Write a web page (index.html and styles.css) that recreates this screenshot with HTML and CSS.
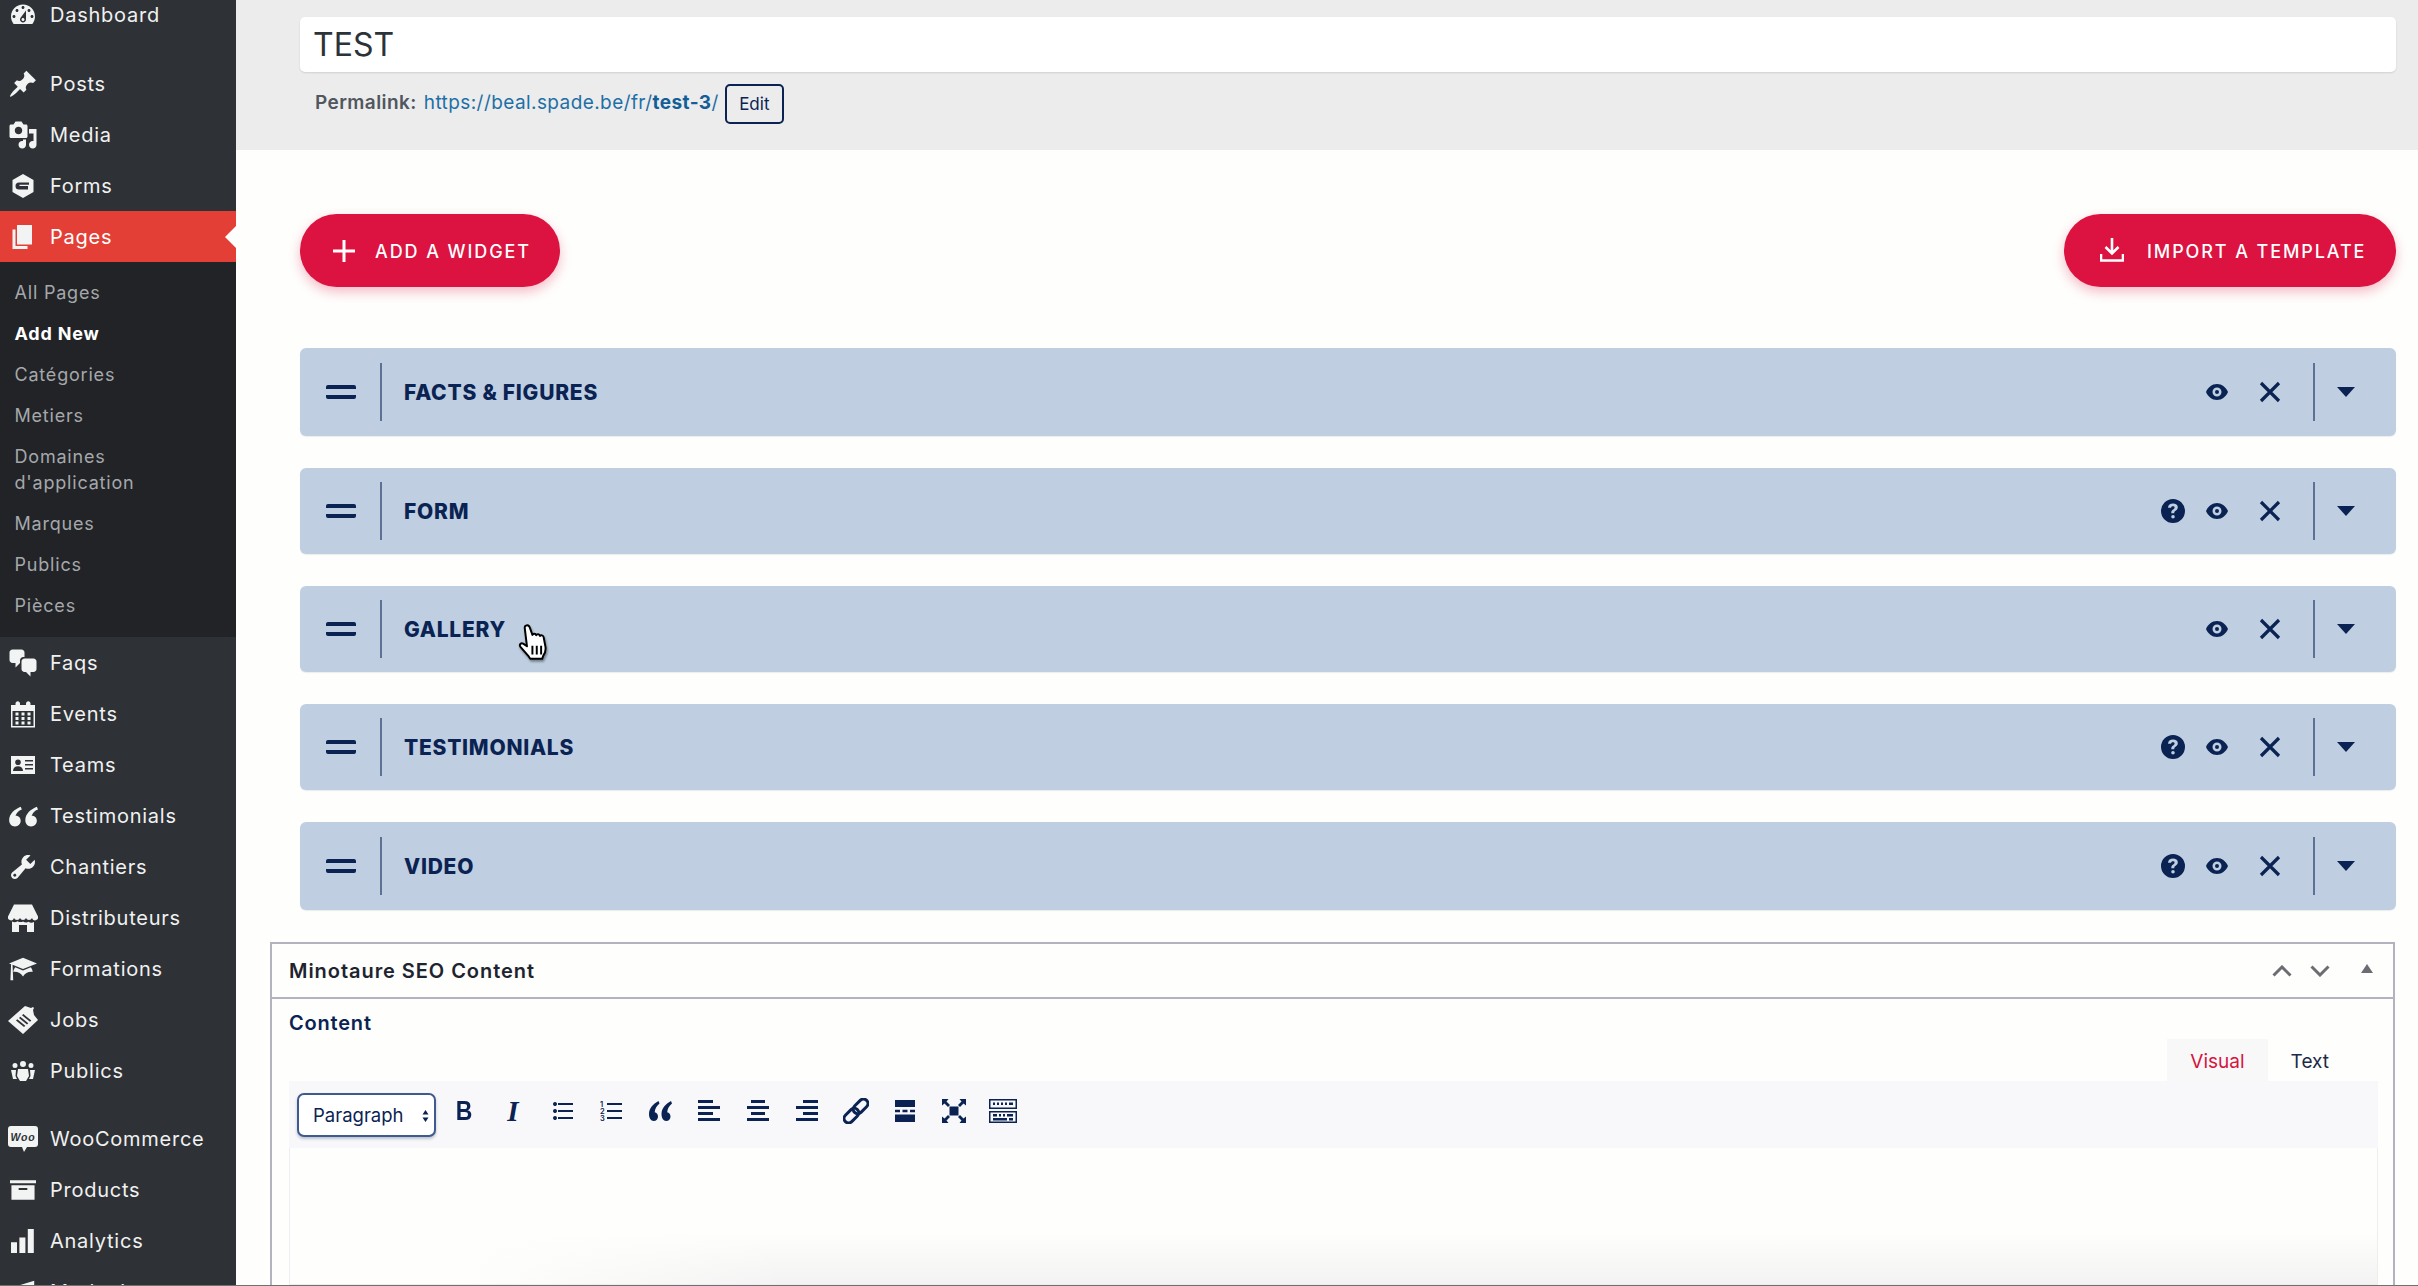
FILE: index.html
```html
<!DOCTYPE html>
<html lang="en">
<head>
<meta charset="utf-8">
<title>Add New Page</title>
<link rel="stylesheet" href="styles.css">
</head>
<body>
<svg class="defs" width="0" height="0" aria-hidden="true">
  <defs>
    <symbol id="i-q" viewBox="0 0 24 24"><path fill-rule="evenodd" d="M12 0a12 12 0 1 1 0 24a12 12 0 0 1 0-24zM12 4.600c-2.900 0-4.800 1.500-5 4.100h3.100c.1-1 .8-1.500 1.800-1.500 1 0 1.700.5 1.700 1.400 0 .8-.5 1.200-1.400 1.800-1.200.8-1.900 1.500-1.900 3v.8h3v-.5c0-.9.3-1.200 1.300-1.900 1.300-.9 2.200-1.800 2.200-3.500 0-2.500-2-3.700-4.800-3.700zM12 16a1.800 1.800 0 1 0 0 3.600a1.800 1.800 0 0 0 0-3.600z"/></symbol>
    <symbol id="i-eye" viewBox="0 0 22 16"><path fill-rule="evenodd" d="M11 0c5 0 9 3.500 11 8c-2 4.500-6 8-11 8S2 12.500 0 8c2-4.500 6-8 11-8zM11 3.500a4.500 4.500 0 1 0 0 9a4.500 4.500 0 0 0 0-9zM11 6a2 2 0 1 1 0 4a2 2 0 0 1 0-4z"/></symbol>
    <symbol id="i-x" viewBox="0 0 22 22"><path d="M2 2l18 18M20 2L2 20" fill="none" stroke="currentColor" stroke-width="3.200"/></symbol>
    <symbol id="i-caret" viewBox="0 0 18 10"><path d="M0 0h18L9 10z"/></symbol>
  </defs>
</svg>

<aside class="sidebar">
  <ul class="menu">
    <li class="item"><span class="ico"><svg viewBox="0 0 20 20"><path d="M3.760 16h12.480c1.100-1.370 1.760-3.110 1.760-5 0-4.420-3.580-8-8-8s-8 3.580-8 8c0 1.890.660 3.630 1.760 5zM10 4c.550 0 1 .450 1 1s-.450 1-1 1-1-.450-1-1 .450-1 1-1zM6 6c.550 0 1 .450 1 1s-.450 1-1 1-1-.450-1-1 .450-1 1-1zm8 0c.550 0 1 .450 1 1s-.450 1-1 1-1-.450-1-1 .450-1 1-1zm-5.370 5.550L12 7v6c0 1.100-.900 2-2 2s-2-.900-2-2c0-.570.240-1.080.630-1.450zM4 10c.550 0 1 .450 1 1s-.450 1-1 1-1-.450-1-1 .450-1 1-1zm12 0c.550 0 1 .450 1 1s-.450 1-1 1-1-.450-1-1 .450-1 1-1zm-5 3c0-.550-.450-1-1-1s-1 .450-1 1 .450 1 1 1 1-.450 1-1z" fill-rule="evenodd"/></svg></span>Dashboard</li>
    <li class="sep"></li>
    <li class="item"><span class="ico"><svg viewBox="0 0 20 20"><path d="M10.440 3.020l1.820-1.820 6.360 6.350-1.830 1.820c-1.050-.680-2.480-.570-3.410.360l-.750.750c-.920.930-1.040 2.350-.350 3.410l-1.830 1.820-2.410-2.410-2.800 2.790c-.420.420-3.380 2.710-3.800 2.290s1.860-3.390 2.280-3.810l2.790-2.790L4.100 9.360l1.830-1.820c1.050.690 2.480.570 3.400-.360l.750-.750c.930-.920 1.050-2.350.360-3.410z"/></svg></span>Posts</li>
    <li class="item"><span class="ico"><svg viewBox="0 0 20 20"><path fill-rule="evenodd" d="M13 11V4c0-.550-.450-1-1-1h-1.670L9 1H5L3.670 3H2c-.550 0-1 .450-1 1v7c0 .550.450 1 1 1h10c.550 0 1-.450 1-1zM7 4.500c1.380 0 2.500 1.120 2.500 2.500S8.380 9.500 7 9.500 4.500 8.380 4.500 7 5.620 4.500 7 4.500zM14 6h5v10.500c0 1.380-1.120 2.500-2.500 2.500S14 17.880 14 16.500s1.120-2.500 2.500-2.500c.170 0 .340.020.500.050V9h-3V6zm-4 8.050V13h2v3.500c0 1.380-1.120 2.500-2.500 2.500S7 17.880 7 16.500 8.120 14 9.500 14c.170 0 .340.020.500.050z"/></svg></span>Media</li>
    <li class="item"><span class="ico s24"><svg viewBox="0 0 24 24"><path fill-rule="evenodd" d="M12 0l10.500 6v12L12 24 1.500 18V6zM8 8.500a3.500 3.500 0 0 0 0 7h9v-3.500H8.500v-1.200H18V8.500z"/></svg></span>Forms</li>
    <li class="item current"><span class="ico"><svg viewBox="0 0 20 20"><path d="M6 15V2h10v13H6zm-1 1h8v2H3V5h2v11z"/></svg></span>Pages</li>
    <li class="submenu">
      <ul class="sublist">
        <li class="sub">All Pages</li>
        <li class="sub active">Add New</li>
        <li class="sub">Catégories</li>
        <li class="sub">Metiers</li>
        <li class="sub">Domaines d'application</li>
        <li class="sub">Marques</li>
        <li class="sub">Publics</li>
        <li class="sub">Pièces</li>
      </ul>
    </li>
    <li class="item"><span class="ico"><svg viewBox="0 0 20 20"><path d="M11 6h-.820C9.070 6 8 7.200 8 8.160V10l-3 3v-3H3c-1.100 0-2-.900-2-2V3c0-1.100.900-2 2-2h6c1.100 0 2 .900 2 2v3zm0 1h6c1.100 0 2 .900 2 2v5c0 1.100-.900 2-2 2h-2v3l-3-3h-1c-1.100 0-2-.900-2-2V9c0-1.100.900-2 2-2z"/></svg></span>Faqs</li>
    <li class="item"><span class="ico"><svg viewBox="0 0 20 20"><path fill-rule="evenodd" d="M15 4h3v15H2V4h3V3c0-.410.150-.760.440-1.060.290-.290.650-.440 1.060-.440s.770.150 1.060.440c.290.300.440.650.440 1.060v1h4V3c0-.410.150-.760.440-1.060.290-.290.650-.440 1.060-.440s.770.150 1.060.440c.290.300.440.650.440 1.060v1zM17 18V8H3v10h14zM7 9v2H5V9h2zm2 0h2v2H9V9zm4 2V9h2v2h-2zm-6 1v2H5v-2h2zm2 0h2v2H9v-2zm4 2v-2h2v2h-2zm-6 1v2H5v-2h2zm4 2H9v-2h2v2zm4 0h-2v-2h2v2z"/></svg></span>Events</li>
    <li class="item"><span class="ico s24"><svg viewBox="0 0 24 18"><path fill-rule="evenodd" d="M0 0h24v18H0zM7 3.500a2.800 2.800 0 1 0 0 5.600a2.800 2.800 0 0 0 0-5.600zM2 15h10c0-3-2-4.800-5-4.800S2 12 2 15zM14 4v1.500h8V4zM14 8v1.500h8V8zM14 12v1.500h8V12z"/></svg></span>Teams</li>
    <li class="item"><span class="ico wide"><svg viewBox="0 0 26 20"><path d="M11 2C6 4 1 8 1 13.500 1 17 3.200 19 6 19s5-2 5-4.800c0-2.700-2-4.400-4.500-4.400C7.500 7 9 5.500 12 4.300zM25 2c-5 2-10 6-10 11.500 0 3.500 2.200 5.500 5 5.500s5-2 5-4.800c0-2.700-2-4.400-4.500-4.400 1-2.800 2.500-4.300 5.500-5.500z"/></svg></span>Testimonials</li>
    <li class="item"><span class="ico"><svg viewBox="0 0 20 20"><path fill-rule="evenodd" d="M16.680 9.770c-1.340 1.340-3.300 1.670-4.950.990l-5.410 6.520c-.990.990-2.590.990-3.580 0s-.990-2.590 0-3.570l6.520-5.420c-.680-1.650-.350-3.610.990-4.950 1.280-1.280 3.120-1.620 4.720-1.060l-2.890 2.890 2.820 2.820 2.860-2.870c.530 1.580.180 3.390-1.080 4.670zM3.810 16.210c.400.390 1.040.390 1.430 0 .400-.400.400-1.040 0-1.430-.390-.400-1.030-.400-1.430 0-.390.390-.390 1.030 0 1.430z"/></svg></span>Chantiers</li>
    <li class="item"><span class="ico wide"><svg viewBox="0 0 30 27"><path fill-rule="evenodd" d="M6 0h18l6 12a3 3 0 0 1-6 1.500a3.200 3.200 0 0 1-6 0a3.200 3.200 0 0 1-6 0a3.200 3.200 0 0 1-6 0a3 3 0 0 1-6-1.500zM4 17c2 1 4 .8 5.500-.3 1.700 1 3.800 1.300 5.500.3 1.700 1 3.800 1.300 5.500.3 1.500 1.100 3.500 1.300 5.500.3v10h-7v-7h-8v7H4z"/></svg></span>Distributeurs</li>
    <li class="item"><span class="ico wide"><svg viewBox="0 0 20 20"><path fill-rule="evenodd" d="M10 10L2.540 7.020 3 18H1l.480-11.410L0 6l10-4 10 4zM10 11l5.570-2.230c.710.940 1.200 2.070 1.360 3.300-.300-.040-.610-.070-.930-.070-2.550 0-4.780 1.370-6 3.410C8.780 13.370 6.550 12 4 12c-.320 0-.630.030-.930.070.160-1.230.650-2.360 1.360-3.300z"/></svg></span>Formations</li>
    <li class="item"><span class="ico wide"><svg viewBox="0 0 30 28"><path fill-rule="evenodd" d="M0 15L17 0l6 2 2-1 1 1-1 2 1 5 4 5-15 14zM8 14.500l8 6.500 1.300-1.200-8-6.500zM11 12l8 6.500 1.300-1.200-8-6.500zM14 9.300l8 6.500 1.300-1.200-8-6.500z"/></svg></span>Jobs</li>
    <li class="item"><span class="ico s24"><svg viewBox="0 0 24 24"><path d="M12 2a3 3 0 1 1 0 6a3 3 0 0 1 0-6zM4 4a2.500 2.500 0 1 1 0 5a2.500 2.500 0 0 1 0-5zM20 4a2.500 2.500 0 1 1 0 5a2.500 2.500 0 0 1 0-5zM7 10h10l1 7-3 5H9l-3-5zM0 11h5l-.500 6 1.500 3H2zM19 11h5l-2 9h-4l1.500-3z"/></svg></span>Publics</li>
    <li class="sep sep-b"></li>
    <li class="item"><span class="ico wide"><svg viewBox="0 0 30 26"><path d="M3 0h24a3 3 0 0 1 3 3v15a3 3 0 0 1-3 3h-8l-3 5-2-5H3a3 3 0 0 1-3-3V3a3 3 0 0 1 3-3z"/><text class="woo" x="15" y="15" text-anchor="middle">Woo</text></svg></span>WooCommerce</li>
    <li class="item"><span class="ico s26"><svg viewBox="0 0 27 20"><path fill-rule="evenodd" d="M0 0h27v3H0zM1.500 5h24v15h-24zM9 8v2h9V8z"/></svg></span>Products</li>
    <li class="item"><span class="ico s24"><svg viewBox="0 0 20 20"><path d="M19 20V0h-5v20zm-7 0V7H7v13zm-7 0V11H0v9z"/></svg></span>Analytics</li>
    <li class="item"><span class="ico wide"><svg viewBox="0 0 20 20"><path d="M18 2v12L8 11H3a2 2 0 0 1-2-2V7a2 2 0 0 1 2-2h5z"/></svg></span>Marketing</li>
  </ul>
</aside>

<main class="main">
  <section class="title-area">
    <div class="title-input">TEST</div>
    <div class="permalink">
      <strong class="perma-label">Permalink:</strong>
      <a class="perma-url">https://beal.spade.be/fr/<b>test-3</b>/</a>
      <button class="edit-btn">Edit</button>
    </div>
  </section>

  <section class="widgets">
    <div class="actions">
      <button class="pill pill-add">
        <svg class="pill-plus" viewBox="0 0 22 22"><path d="M11 0v22M0 11h22" fill="none" stroke="currentColor" stroke-width="3"/></svg>
        ADD A WIDGET
      </button>
      <button class="pill pill-import">
        <svg class="pill-dl" viewBox="0 0 24 24"><path d="M12 0v15M5.500 9l6.500 6.500L18.500 9M1 16v6.500h22V16" fill="none" stroke="currentColor" stroke-width="2.600"/></svg>
        IMPORT A TEMPLATE
      </button>
    </div>

    <div class="rows">
      <article class="row row-first">
        <span class="handle"></span><span class="rule"></span><h3 class="row-title">FACTS &amp; FIGURES</h3>
        <div class="tools">
          <svg class="t-eye"><use href="#i-eye"/></svg>
          <svg class="t-x"><use href="#i-x"/></svg>
          <span class="rule rule-r"></span>
          <svg class="t-caret"><use href="#i-caret"/></svg>
        </div>
      </article>
      <article class="row">
        <span class="handle"></span><span class="rule"></span><h3 class="row-title">FORM</h3>
        <div class="tools">
          <svg class="t-q"><use href="#i-q"/></svg>
          <svg class="t-eye"><use href="#i-eye"/></svg>
          <svg class="t-x"><use href="#i-x"/></svg>
          <span class="rule rule-r"></span>
          <svg class="t-caret"><use href="#i-caret"/></svg>
        </div>
      </article>
      <article class="row">
        <span class="handle"></span><span class="rule"></span><h3 class="row-title">GALLERY</h3>
        <svg class="cursor" viewBox="0 0 28 34"><path d="M7 1.500c1.500-.8 3 0 3.500 1.500l2.500 7c.5-1.500 3-1.500 3.500.3.600-1.300 3-1.300 3.500.7.800-1.200 3-.7 3.300 1l1.700 9c.4 3-.5 6-2 8l-1 3H11l-2-3-7-8c-1.500-2 .5-4 2.500-3l3.500 2.500L6 4c-.2-1 0-2 1-2.500z" fill="#fff" stroke="#000" stroke-width="1.800" stroke-linejoin="round"/><path d="M13 20v8M17 20v8M21 20v8" stroke="#000" stroke-width="1.800"/></svg>
        <div class="tools">
          <svg class="t-eye"><use href="#i-eye"/></svg>
          <svg class="t-x"><use href="#i-x"/></svg>
          <span class="rule rule-r"></span>
          <svg class="t-caret"><use href="#i-caret"/></svg>
        </div>
      </article>
      <article class="row">
        <span class="handle"></span><span class="rule"></span><h3 class="row-title">TESTIMONIALS</h3>
        <div class="tools">
          <svg class="t-q"><use href="#i-q"/></svg>
          <svg class="t-eye"><use href="#i-eye"/></svg>
          <svg class="t-x"><use href="#i-x"/></svg>
          <span class="rule rule-r"></span>
          <svg class="t-caret"><use href="#i-caret"/></svg>
        </div>
      </article>
      <article class="row row-last">
        <span class="handle"></span><span class="rule"></span><h3 class="row-title">VIDEO</h3>
        <div class="tools">
          <svg class="t-q"><use href="#i-q"/></svg>
          <svg class="t-eye"><use href="#i-eye"/></svg>
          <svg class="t-x"><use href="#i-x"/></svg>
          <span class="rule rule-r"></span>
          <svg class="t-caret"><use href="#i-caret"/></svg>
        </div>
      </article>
    </div>
  </section>

  <section class="metabox">
    <header class="mb-head">
      <h2 class="mb-title">Minotaure SEO Content</h2>
      <div class="mb-tools">
        <svg class="mb-chev" viewBox="0 0 20 12"><path d="M1.500 10.500L10 2l8.500 8.500" fill="none" stroke="currentColor" stroke-width="3"/></svg>
        <svg class="mb-chev" viewBox="0 0 20 12"><path d="M1.500 1.500L10 10l8.500-8.500" fill="none" stroke="currentColor" stroke-width="3"/></svg>
        <svg class="mb-tri" viewBox="0 0 12 9"><path d="M6 0l6 9H0z"/></svg>
      </div>
    </header>
    <div class="mb-body">
      <div class="field-label">Content</div>
      <div class="tabs">
        <span class="tab tab-on">Visual</span>
        <span class="tab">Text</span>
      </div>
      <div class="editor">
        <div class="toolbar">
          <div class="format">Paragraph
            <svg class="format-arrows" viewBox="0 0 6 12"><path d="M3 0l3 4.500H0zM3 12L0 7.500h6z"/></svg>
          </div>
          <div class="tb-icons">
            <span class="tb"><span class="tb-b">B</span></span>
            <span class="tb tb-i">I</span>
            <span class="tb"><svg viewBox="0 0 24 24"><path d="M3 5a2 2 0 1 1 0 .010zM3 12a2 2 0 1 1 0 .010zM3 19a2 2 0 1 1 0 .010z"/><path d="M8 5h15M8 12h15M8 19h15" stroke="currentColor" stroke-width="1.800"/></svg></span>
            <span class="tb"><svg viewBox="0 0 24 24"><text class="oln" x="1" y="7.500">1</text><text class="oln" x="1" y="14.500">2</text><text class="oln" x="1" y="21.500">3</text><path d="M8 5h15M8 12h15M8 19h15" stroke="currentColor" stroke-width="1.800"/></svg></span>
            <span class="tb"><svg viewBox="0 0 24 24"><path d="M10.500 2C5 5 1 9.500 1 15c0 4 1.800 7 4.700 7 2.600 0 4.300-2 4.300-4.500 0-2.300-1.300-4-3.300-4.300C7 10 8.500 7 11.500 4.500zM23 2c-5.500 3-9.500 7.500-9.500 13 0 4 1.800 7 4.700 7 2.600 0 4.300-2 4.300-4.500 0-2.300-1.300-4-3.300-4.300.3-3.200 1.800-6.200 4.800-8.700z"/></svg></span>
            <span class="tb"><svg viewBox="0 0 24 24"><path d="M1 1h15v3H1zM1 7h22v3H1zM1 13h15v3H1zM1 19h22v3H1z"/></svg></span>
            <span class="tb"><svg viewBox="0 0 24 24"><path d="M5 1h14v3H5zM1 7h22v3H1zM5 13h14v3H5zM1 19h22v3H1z"/></svg></span>
            <span class="tb"><svg viewBox="0 0 24 24"><path d="M8 1h15v3H8zM1 7h22v3H1zM8 13h15v3H8zM1 19h22v3H1z"/></svg></span>
            <span class="tb tb-link"><svg viewBox="0 0 26 26"><g fill="none" stroke="currentColor" stroke-width="3" transform="rotate(-45 13 13)"><rect x="-2" y="8.500" width="17" height="9" rx="4.500"/><rect x="11" y="8.500" width="17" height="9" rx="4.500"/></g></svg></span>
            <span class="tb"><svg viewBox="0 0 24 24"><path d="M2 1h20v7H2zM2 15.500h20V23H2zM2 10.800h5v2.400H2zM9.500 10.800h5v2.400h-5zM17 10.800h5v2.400h-5z"/></svg></span>
            <span class="tb"><svg viewBox="0 0 24 24"><path d="M7.500 7.500h9v9h-9zM0 0h6.500L4.500 2.500 8 6 6 8 2.500 4.500 0 6.500zM24 0v6.500L21.500 4.500 18 8 16 6 19.500 2.500 17.500 0zM0 24v-6.500l2.500 2L6 16l2 2-3.500 3.500 2 2.500zM24 24h-6.500l2-2.500L16 18l2-2 3.500 3.500 2.500-2z"/></svg></span>
            <span class="tb tb-kb"><svg viewBox="0 0 28 24"><path fill-rule="evenodd" d="M0 0h28v10H0zM1.500 1.500v7h25v-7zM4 3.500h2v2.500H4zM8 3.500h2v2.500H8zM12 3.500h2v2.500h-2zM16 3.500h2v2.500h-2zM20 3.500h4v2.500h-4zM0 12h28v12H0zM1.500 13.500v9h25v-9zM4 15h4v2.500H4zM10 15h2v2.500h-2zM14 15h2v2.500h-2zM18 15h6v2.500h-6zM4 19h14v2.500H4zM20 19h4v2.500h-4z"/></svg></span>
          </div>
        </div>
        <div class="edit-area"></div>
      </div>
    </div>
  </section>
</main>
</body>
</html>
```

FILE: styles.css
```css
* { box-sizing: border-box; }
html, body { margin: 0; height: 1286px; overflow: hidden; }
body { position: relative; display: flex; background: #fefefc; font-family: Inter, "Liberation Sans", sans-serif; color: #0a2353; }
body::after { content: ""; position: absolute; left: 0; right: 0; bottom: 0; height: 1px; background: #6f7071; }
.defs { position: absolute; }
ul { list-style: none; margin: 0; padding: 0; }
h2, h3 { margin: 0; }

/* sidebar */
.sidebar { width: 236px; flex: none; background: #2e3236; color: #f0f1f1; overflow: hidden; }
.menu { margin-top: -11px; }
.item { display: flex; align-items: center; height: 51px; font-size: 20px; letter-spacing: .75px; }
.sep { height: 18px; }
.sep-b { height: 17px; }
.ico { width: 46px; margin-right: 4px; flex: none; display: flex; align-items: center; justify-content: center; }
.ico svg { width: 30px; height: 30px; fill: #f2f3f3; }
.ico.wide svg { width: 30px; height: 28px; }
.ico.s24 svg { width: 24px; height: 24px; }
.ico.s26 svg { width: 26px; height: 20px; }
.woo { font: italic 700 10.500px "Liberation Sans", sans-serif; fill: #2e3236; }
.current { position: relative; background: #e43f36; color: #fff; }
.current::after { content: ""; position: absolute; right: 0; top: 15px; border: 11px solid transparent; border-right-color: #fefefc; border-left-width: 0; }
.submenu { background: #212327; padding: 10.500px 0 10.500px; }
.sub { padding: 7.500px 30px 7.500px 14.500px; font-size: 18px; line-height: 26px; letter-spacing: .8px; color: #a5a8ab; }
.sub.active { color: #fff; font-weight: 700; }

/* main */
.main { flex: 1; min-width: 0; }
.title-area { height: 150px; padding: 17px 22px 0 64px; background: #ececed; }
.title-input { height: 55px; padding: 0 13px; background: #fff; border-radius: 5px; box-shadow: 0 1px 2px rgba(0,0,0,.12); display: flex; align-items: center; font-size: 32px; color: #2c3338; }
.permalink { display: flex; align-items: center; height: 40px; margin-top: 12px; padding-left: 15px; font-size: 19px; letter-spacing: .42px; }
.perma-label { color: #50575e; font-weight: 600; margin-right: 7px; margin-bottom: 4px; }
.perma-url { color: #1d6fa5; margin-right: 6px; margin-bottom: 4px; }
.perma-url b { color: #135e96; font-weight: 700; }
.edit-btn { width: 59px; height: 40px; padding: 0; background: transparent; border: 2.500px solid #0a2353; border-radius: 5px; color: #0a2353; font: 400 17px Inter, sans-serif; }

.widgets { padding: 64px 22px 0 64px; }
.actions { display: flex; justify-content: space-between; }
.pill { display: flex; align-items: center; height: 73px; padding: 2px 0 0; background: #dc1240; color: #fff; border: 0; border-radius: 37px; box-shadow: 0 5px 12px rgba(220,18,64,.28); font: 500 18px Inter, sans-serif; letter-spacing: 1.900px; white-space: nowrap; }
.pill-add { width: 260px; padding-left: 33px; }
.pill-import { width: 332px; padding-left: 36px; }
.pill-plus { width: 22px; height: 22px; margin-right: 20px; margin-top: -2px; }
.pill-dl { width: 24px; height: 24px; margin-right: 23px; margin-top: -4px; }

.rows { display: flex; flex-direction: column; gap: 32px; margin-top: 61px; }
.row { position: relative; display: flex; align-items: center; height: 86px; padding: 0 0 0 26px; background: #bfcfe1; border-radius: 6px; box-shadow: 0 1px 1px rgba(10,35,83,.08); }
.row-first { height: 88px; }
.row-last { height: 88px; }
.handle { width: 30px; height: 14px; border-top: 4px solid #0a2353; border-bottom: 4px solid #0a2353; border-radius: 2px; }
.rule { width: 2px; height: 58px; margin-left: 24px; background: #5d7195; flex: none; }
.row-title { margin-left: 22px; font-size: 21px; font-weight: 800; letter-spacing: .75px; color: #0a2353; padding-top: 1px; }
.cursor { position: absolute; left: 218px; top: 38px; width: 31px; height: 37px; filter: drop-shadow(1px 2px 1px rgba(0,0,0,.4)); }
.tools { margin-left: auto; display: flex; align-items: center; }
.tools svg { fill: #0a2353; color: #0a2353; display: block; }
.t-q { width: 24px; height: 24px; margin-right: 21px; }
.t-eye { width: 22px; height: 16px; margin-right: 30.500px; }
.t-x { width: 22px; height: 22px; margin-right: 32px; }
.rule-r { margin-left: 0; margin-right: 22.500px; }
.t-caret { width: 18px; height: 10px; margin-right: 41px; }

/* metabox */
.metabox { margin: 32px 23px 0 34px; height: 400px; border: 2px solid #b2b3bf; }
.mb-head { display: flex; align-items: center; justify-content: space-between; height: 55px; padding: 0 20px 0 17px; border-bottom: 2px solid #b2b3bf; }
.mb-title { font-size: 20px; font-weight: 600; letter-spacing: .95px; color: #1d2430; }
.mb-tools { display: flex; align-items: center; color: #6c6c72; }
.mb-chev { width: 20px; height: 12px; margin-right: 18px; }
.mb-tri { width: 12px; height: 9px; margin-left: 13px; margin-bottom: 5px; fill: #6c6c72; }
.mb-body { padding: 11px 15px 0 17px; }
.field-label { height: 29px; font-size: 20px; font-weight: 600; letter-spacing: .8px; line-height: 26px; }
.tabs { display: flex; justify-content: flex-end; height: 42px; padding-right: 26px; }
.tab { display: flex; align-items: center; padding: 2px 23px 0; font-size: 19px; color: #1c2a4a; }
.tab-on { color: #d5143f; background: #f8f8f9; }
.toolbar { display: flex; align-items: center; height: 67px; padding-left: 8px; background: #f8f8fa; }
.format { position: relative; display: flex; align-items: center; width: 139px; height: 44px; padding-left: 14px; background: #fff; border: 2px solid #3f5a8f; border-radius: 7px; box-shadow: 0 2px 3px rgba(10,35,83,.25); font-size: 18.500px; color: #0a2353; }
.format-arrows { position: absolute; right: 5px; top: 15px; width: 7px; height: 12px; fill: #0a2353; }
.tb-icons { display: flex; align-items: center; margin-left: 3.500px; margin-top: -7px; }
.tb { width: 49px; height: 24px; display: flex; align-items: center; justify-content: center; color: #0a2353; }
.tb svg { flex: none; width: 24px; height: 24px; fill: #0a2353; }
.tb-link svg { width: 26px; height: 26px; fill: none; }
.tb-kb svg { width: 28px; }
.tb-b { display: block; font: 700 28px "Liberation Sans", sans-serif; transform: scaleX(.82); }
.tb-i { font: italic 700 29px "Liberation Serif", serif; }
.oln { font: 600 7.500px Inter, sans-serif; }
.edit-area { height: 137px; border: 1px solid #eeeef1; border-top: 0; background: linear-gradient(to right, #fefefc 8%, rgba(254,254,252,0) 24%), linear-gradient(#fefefc 62%, #f3f3f3); }
```
